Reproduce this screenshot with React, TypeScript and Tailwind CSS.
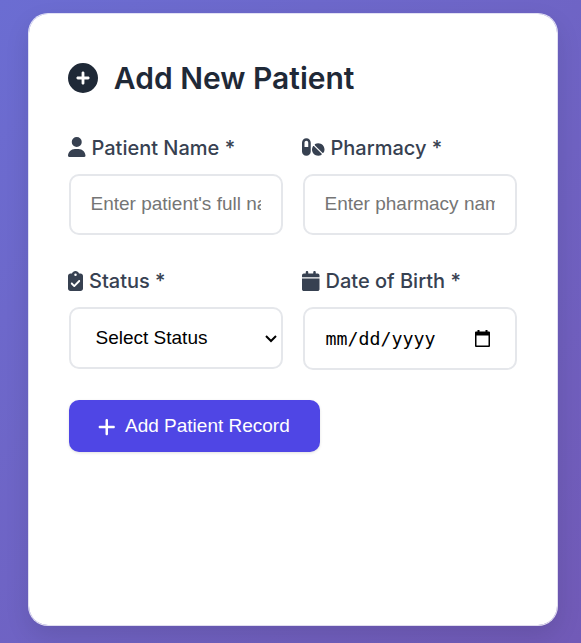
import React from "react";
import { FaCalendar, FaCirclePlus, FaClipboardCheck, FaPills, FaPlus, FaUser } from "react-icons/fa6";

const box = "w-full rounded-[10px] border-2 border-[#e5e7eb] bg-white font-['Liberation_Sans',Arial,sans-serif] text-[19px]";

function Field({ icon, label, children }: { icon: React.ReactNode; label: string; children: React.ReactNode }) {
  return (
    <div className="min-w-0">
      <div className="mb-[11px] -ml-[0.8px] flex h-[30px] items-center gap-[5.8px] whitespace-nowrap text-[20px] font-medium text-[#374151]">
        {icon}
        <span>{label}</span>
      </div>
      {children}
    </div>
  );
}

export default function App() {
  return (
    <div className="h-[643px] w-[581px] overflow-hidden bg-linear-135 from-[#6b6dd2] to-[#715ab7] pt-[13px] pl-[28px] font-['Inter',sans-serif]">
      <div className="h-[613px] w-[530px] rounded-[20px] border border-white/80 bg-white bg-clip-padding px-[40px] pt-[39px] shadow-[0_10px_24px_rgba(0,0,0,0.1)]">
        <h2 className="-ml-[0.8px] flex h-[50px] items-center gap-[15.6px] text-[30px] font-semibold text-[#1f2937]">
          <FaCirclePlus className="size-[30px]" />
          <span>Add New Patient</span>
        </h2>
        <div className="mt-[30px] grid grid-cols-2 gap-x-[20px]">
          <Field icon={<FaUser className="mb-[2px] h-[20px] w-[17.5px]" />} label="Patient Name *">
            <input className={`${box} h-[61px] pr-[20px] pb-[2px] pl-[19.5px] placeholder:text-[#757575]`} placeholder="Enter patient's full name" />
          </Field>
          <Field icon={<FaPills className="mb-[2px] h-[20px] w-[22.5px]" />} label="Pharmacy *">
            <input className={`${box} h-[61px] pr-[20px] pb-[2px] pl-[19.5px] placeholder:text-[#757575]`} placeholder="Enter pharmacy name" />
          </Field>
        </div>
        <div className="mt-[31px] grid grid-cols-2 gap-x-[20px]">
          <Field icon={<FaClipboardCheck className="mb-px h-[20px] w-[15px]" />} label="Status *">
            <div className={`${box} flex h-[62px] items-center justify-between pr-[4px] pl-[24.5px] text-black`}>
              <span>Select Status</span>
              <svg className="mt-px h-[8px] w-[12px]" viewBox="0 0 12 8" fill="none" stroke="black" strokeWidth="2">
                <path d="M1 1l5 5 5-5" />
              </svg>
            </div>
          </Field>
          <Field icon={<FaCalendar className="mb-px h-[20px] w-[17.5px]" />} label="Date of Birth *">
            <div className={`${box} flex h-[63px] items-center justify-between pr-[25px] pl-[20.5px] text-black`}>
              <span className="font-['DejaVu_Sans_Mono',monospace] text-[18.3px]">mm/dd/yyyy</span>
              <svg className="h-[17px] w-[15px]" viewBox="0 0 15 17">
                <path fillRule="evenodd" d="M2.5 0h2v1.5h6V0h2v1.5H14a1 1 0 0 1 1 1V16a1 1 0 0 1-1 1H1a1 1 0 0 1-1-1V2.5a1 1 0 0 1 1-1h1.5zM1.5 5.5v10h12v-10z" />
              </svg>
            </div>
          </Field>
        </div>
        <button className="mt-[30px] flex h-[52px] w-[251px] items-center gap-[9.5px] rounded-[10px] bg-[#4f46e5] pl-[29px] font-['Liberation_Sans',Arial,sans-serif] text-[19px] text-white shadow-[0_1px_3px_rgba(0,0,0,0.12)]">
          <FaPlus className="mt-px h-[20px] w-[17.5px]" />
          <span>Add Patient Record</span>
        </button>
      </div>
    </div>
  );
}
